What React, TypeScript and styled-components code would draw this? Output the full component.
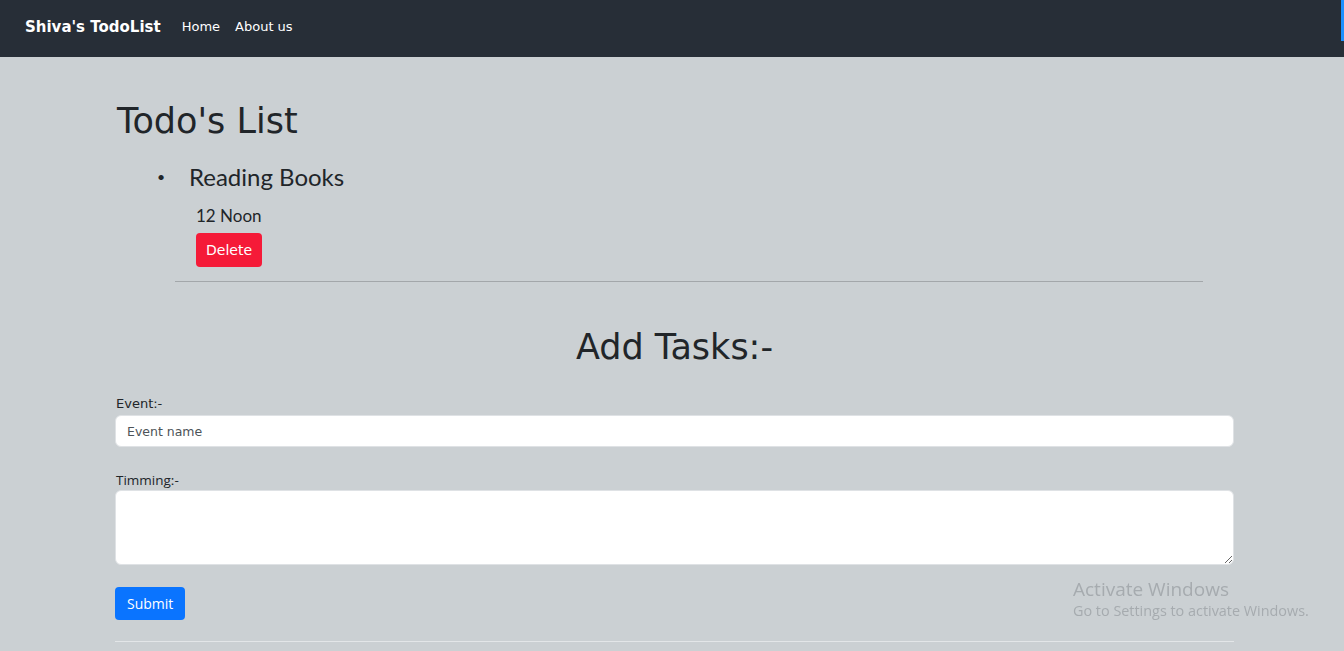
import styled, { createGlobalStyle } from 'styled-components'

const comic = `"Comic Sans MS", "DejaVu Sans", sans-serif`
const segoe = `"Segoe UI", "Open Sans", "Liberation Sans", sans-serif`
const lato = `Lato, "Open Sans", sans-serif`

const GlobalStyle = createGlobalStyle`
  html, body {
    margin: 0;
    padding: 0;
    background: #cbd0d3;
    color: #212529;
    font-family: ${comic};
  }
  * { box-sizing: border-box; }
`

const Navbar = styled.nav`
  height: 57px;
  background: #272e37;
  display: flex;
  align-items: center;
  padding: 0 25px 4px;
  position: relative;
`

const Brand = styled.a`
  font-family: ${comic};
  font-weight: bold;
  font-size: 15px;
  color: #fff;
  margin-right: 21px;
`

const NavLink = styled.a`
  font-family: ${comic};
  font-size: 13px;
  color: #fff;
  margin-right: 15px;
`

const EdgeBar = styled.div`
  position: absolute;
  right: 0;
  top: 0;
  width: 3px;
  height: 41px;
  background: #1e90ff;
`

const Container = styled.main`
  width: 1119px;
  margin-left: 115px;
  padding-top: 43px;
`

const Title = styled.h2`
  font-family: ${comic};
  font-weight: normal;
  font-size: 35px;
  margin: 0 0 20px 2px;
  line-height: 42px;
`

const TodoList = styled.ul`
  margin: 0;
  padding-left: 42px;
  list-style: none;
`

const TodoTitle = styled.li`
  display: flex;
  font-family: ${lato};
  font-size: 24px;
  line-height: 29px;
  margin-bottom: 14px;

  &::before {
    content: '•';
    font-size: 14px;
    width: 32px;
  }
`

const TodoBody = styled.div`
  padding-left: 81px;
`

const TodoTime = styled.p`
  font-family: ${lato};
  font-size: 17px;
  margin: 0 0 6px;
  line-height: 22px;
`

const Button = styled.button<{ $color: string }>`
  font-family: ${(p) => (p.$color === 'red' ? comic : segoe)};
  font-size: 14px;
  color: #fff;
  background: ${(p) => (p.$color === 'red' ? '#f51a38' : '#0a74ff')};
  border: none;
  border-radius: 4px;
  padding: 0 ${(p) => (p.$color === 'red' ? '10px' : '12px')};
  height: ${(p) => (p.$color === 'red' ? '34px' : '33px')};
`

const Divider = styled.hr<{ $light?: boolean }>`
  border: none;
  border-top: 1px solid ${(p) => (p.$light ? '#e3e6e8' : '#a3a7aa')};
  margin: ${(p) => (p.$light ? '21px 0 0' : '14px 31px 0 60px')};
`

const SubTitle = styled.h2`
  font-family: ${comic};
  font-weight: normal;
  font-size: 35px;
  text-align: center;
  margin: 44px 0 28px;
  line-height: 42px;
`

const Label = styled.label<{ $plain?: boolean }>`
  display: block;
  font-family: ${(p) => (p.$plain ? segoe : comic)};
  font-size: ${(p) => (p.$plain ? '13.5px' : '13px')};
  line-height: 16px;
  margin: 0 0 ${(p) => (p.$plain ? '2px' : '3px')} 1px;
`

const Field = styled.div`
  margin-bottom: 25px;
`

const Input = styled.input`
  display: block;
  width: 100%;
  height: 32px;
  border: 1px solid #dfe2e5;
  border-radius: 6px;
  padding: 0 11px;
  font-family: ${comic};
  font-size: 12.5px;
  background: #fff;

  &::placeholder { color: #4d5358; }
`

const TextArea = styled.textarea`
  display: block;
  width: 100%;
  height: 75px;
  border: 1px solid #dfe2e5;
  border-radius: 6px;
  background: #fff;
  margin-bottom: 22px;
`

const Watermark = styled.div`
  position: fixed;
  left: 1073px;
  top: 577px;
  font-family: ${segoe};
  color: #a6abaf;
`

const WatermarkTitle = styled.div`
  font-size: 19px;
  line-height: 24px;
`

const WatermarkText = styled.div`
  font-size: 14.4px;
  line-height: 20px;
`

const App = () => {
  return (
    <>
      <GlobalStyle />
      <Navbar>
        <Brand>Shiva's TodoList</Brand>
        <NavLink>Home</NavLink>
        <NavLink>About us</NavLink>
        <EdgeBar />
      </Navbar>
      <Container>
        <Title>Todo's List</Title>
        <TodoList>
          <TodoTitle>Reading Books</TodoTitle>
        </TodoList>
        <TodoBody>
          <TodoTime>12 Noon</TodoTime>
          <Button $color="red">Delete</Button>
        </TodoBody>
        <Divider />
        <SubTitle>Add Tasks:-</SubTitle>
        <Field>
          <Label>Event:-</Label>
          <Input placeholder="Event name" />
        </Field>
        <Label $plain>Timming:-</Label>
        <TextArea />
        <Button $color="blue">Submit</Button>
        <Divider $light />
      </Container>
      <Watermark>
        <WatermarkTitle>Activate Windows</WatermarkTitle>
        <WatermarkText>Go to Settings to activate Windows.</WatermarkText>
      </Watermark>
    </>
  )
}

export default App
